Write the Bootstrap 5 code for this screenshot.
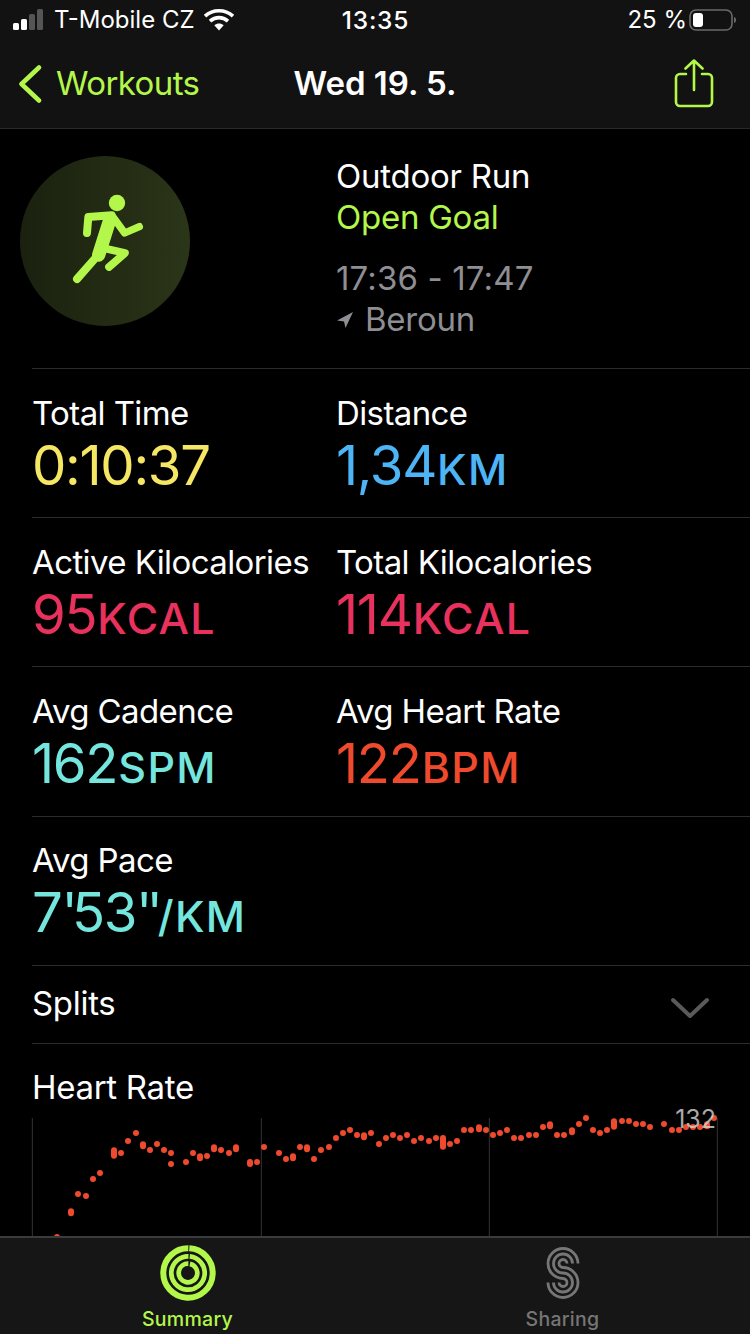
<!DOCTYPE html>
<html lang="en">
<head>
<meta charset="utf-8">
<title>Workout</title>
<link href="https://cdn.jsdelivr.net/npm/bootstrap@5.3.0/dist/css/bootstrap.min.css" rel="stylesheet">
<style>
html,body{background:#000;margin:0}
body{width:750px;height:1334px;overflow:hidden;font-family:Inter,"Liberation Sans",sans-serif;color:#fff;font-size:33px;letter-spacing:-.6px}
.screen{height:1334px}
.head-bar{background:#121212;border-bottom:1px solid #2a2a2a;height:129px}
.status-row{height:40px;padding:0 12px 0 13px;font-size:24px;letter-spacing:0;line-height:40px}
.status-side{width:300px}
.status-time{font-size:24.5px;font-weight:500;letter-spacing:.8px}
.batt-pct{margin-right:2px}
.nav-row{height:88px;padding:0 36px 0 18px}
.nav-link-green{color:#b4f74b;font-size:33px}
.nav-title{font-size:33px;font-weight:600;letter-spacing:0;left:0;right:0;top:0;bottom:0}
.hero-area{height:239px;padding:27px 0 0 20px}
.hero-icon{width:170px;height:170px;margin-right:146px}
.hero-text{line-height:41px;letter-spacing:-.25px}
.text-lime{color:#b4f74b}
.text-dim{color:#8e8e93}
.hero-gap{margin-top:20px;letter-spacing:.15px}
.place-arrow{margin-right:11px}
.stat-line{margin-left:32px;border-top:1px solid #2c2c2e;height:149px;padding:24px 0 0 1px}
.stat-line.tall{height:150px}
.stat-line.pace-line{padding-top:23px}
.stat-cell{width:305px;margin-left:-1px;white-space:nowrap}
.stat-label{line-height:41px}
.stat-value{font-size:54.5px;line-height:62px;letter-spacing:-1.3px}
.stat-unit{font-size:43px;font-weight:500;letter-spacing:1.3px;margin-left:1px}
.tick-mark{letter-spacing:-6px}
.c-yellow{color:#f5e663}.c-blue{color:#4db5f5}.c-pink{color:#e8325d}.c-cyan{color:#74e6dd}.c-red{color:#ef4a2d}
.splits-line{margin-left:32px;border-top:1px solid #2c2c2e;height:78px;padding:0 41px 2px 0;letter-spacing:-.3px}
.hr-area{margin-left:32px;border-top:1px solid #2c2c2e;padding:23px 0 0 0;letter-spacing:-.3px}
.hr-label{line-height:41px}
.chart-box{margin:10px 0 0 -32px;width:750px;height:118px}
.chart-box svg{display:block;overflow:visible}
.chart-max{right:34px;top:-13px;font-size:25px;letter-spacing:0;color:#d4d4d4;opacity:.8;line-height:28px}
.tab-strip{flex:1;background:#161616;border-top:2px solid #3b3b3b;z-index:2}
.tab-item{width:375px;padding-top:6px;font-size:19.5px;letter-spacing:.3px;font-weight:500;line-height:24px;color:#767676}
.tab-item.on{color:#b4f74b}
.tab-item svg{display:block;margin-bottom:5px}
.flow-clip{height:1107px;overflow:hidden}
</style>
</head>
<body>
<div class="screen d-flex flex-column">
  <header class="head-bar flex-shrink-0">
    <div class="status-row d-flex align-items-center justify-content-between">
      <div class="status-side d-flex align-items-center">
        <svg width="37" height="22" viewBox="0 0 37 22" class="me-1"><g fill="#fff"><rect x="0" y="14" width="6" height="7" rx="1.5"/><rect x="8" y="10" width="6" height="11" rx="1.5"/></g><g fill="#555"><rect x="16" y="5" width="6" height="16" rx="1.5"/><rect x="24" y="0" width="6" height="21" rx="1.5"/></g></svg>
        <span>T-Mobile CZ</span>
        <svg width="32" height="24" viewBox="0 0 32 24" class="ms-2"><g fill="none" stroke="#fff" stroke-width="3.6"><path d="M2 8.2C10 .9 22 .9 30 8.2"/><path d="M7 13.2c5.400-4.800 12.600-4.800 18 0"/></g><path d="M11.300 17.300c3-2.500 6.400-2.500 9.400 0L16 22.500z" fill="#fff"/></svg>
      </div>
      <div class="status-time">13:35</div>
      <div class="status-side d-flex align-items-center justify-content-end">
        <span class="batt-pct">25 %</span>
        <svg width="49" height="24" viewBox="0 0 49 24"><rect x="1" y="2" width="42" height="20" rx="6" fill="none" stroke="#6a6a6a" stroke-width="1.600"/><rect x="4" y="5" width="10" height="14" rx="3" fill="#fff"/><path d="M45 9c1.500.5 2 1.500 2 3s-.5 2.500-2 3z" fill="#6a6a6a"/></svg>
      </div>
    </div>
    <nav class="nav-row d-flex align-items-center justify-content-between position-relative">
      <div class="nav-link-green d-flex align-items-center">
        <svg width="26" height="38" viewBox="0 0 26 38" fill="none" stroke="#b4f74b" stroke-width="4.500" stroke-linecap="round" stroke-linejoin="round"><path d="M21 2.500 3.500 19 21 35.500"/></svg>
        <span class="ms-2 ps-1">Workouts</span>
      </div>
      <div class="nav-title position-absolute d-flex align-items-center justify-content-center">Wed 19. 5.</div>
      <svg width="40" height="50" viewBox="0 0 40 50" fill="none" stroke="#b4f74b" stroke-width="2.600" stroke-linecap="round" stroke-linejoin="round"><path d="M12 15H6a4 4 0 0 0-4 4v24a4 4 0 0 0 4 4h28a4 4 0 0 0 4-4V19a4 4 0 0 0-4-4h-6"/><path d="M20 31V2M11.500 9.500 20 1.500l8.500 8"/></svg>
    </nav>
  </header>

  <div class="flow-clip flex-shrink-0">
    <section class="hero-area d-flex">
      <svg class="hero-icon flex-shrink-0" viewBox="60 48 510 510">
        <defs><linearGradient id="disc" x1="0" y1="0" x2="1" y2="0"><stop offset="0" stop-color="#1a210f"/><stop offset="1" stop-color="#2b3518"/></linearGradient></defs>
        <circle cx="315" cy="303" r="255" fill="url(#disc)"/>
        <g fill="none" stroke="#b4f74b" stroke-linecap="round" stroke-linejoin="round">
          <path d="M261 279 265 231 335 226" stroke-width="24"/>
          <path d="M330 238 296 345" stroke-width="40"/>
          <path d="M340 232 374 279 418 260" stroke-width="22"/>
          <path d="M312 325 375 339 327 381" stroke-width="23"/>
          <path d="M288 352 231 417" stroke-width="24"/>
        </g>
        <circle cx="351" cy="189" r="24.500" fill="#b4f74b"/>
      </svg>
      <div class="hero-text">
        <div>Outdoor Run</div>
        <div class="text-lime">Open Goal</div>
        <div class="text-dim hero-gap">17:36 - 17:47</div>
        <div class="text-dim d-flex align-items-center"><svg width="18" height="18" viewBox="0 0 18 18" class="place-arrow"><path d="M17 1 1 9.500l7 1 1.500 6.500z" fill="#8e8e93"/></svg><span>Beroun</span></div>
      </div>
    </section>

    <section class="stat-line d-flex">
      <div class="stat-cell"><div class="stat-label">Total Time</div><div class="stat-value c-yellow">0:10:37</div></div>
      <div class="stat-cell"><div class="stat-label">Distance</div><div class="stat-value c-blue">1,34<span class="stat-unit">KM</span></div></div>
    </section>
    <section class="stat-line d-flex">
      <div class="stat-cell"><div class="stat-label">Active Kilocalories</div><div class="stat-value c-pink">95<span class="stat-unit">KCAL</span></div></div>
      <div class="stat-cell"><div class="stat-label">Total Kilocalories</div><div class="stat-value c-pink">114<span class="stat-unit">KCAL</span></div></div>
    </section>
    <section class="stat-line tall d-flex">
      <div class="stat-cell"><div class="stat-label">Avg Cadence</div><div class="stat-value c-cyan">162<span class="stat-unit">SPM</span></div></div>
      <div class="stat-cell"><div class="stat-label">Avg Heart Rate</div><div class="stat-value c-red">122<span class="stat-unit">BPM</span></div></div>
    </section>
    <section class="stat-line pace-line d-flex">
      <div class="stat-cell"><div class="stat-label">Avg Pace</div><div class="stat-value c-cyan">7<span class="tick-mark">'</span>53<span class="tick-mark">''</span><span class="stat-unit">/KM</span></div></div>
    </section>
    <section class="splits-line d-flex align-items-center justify-content-between">
      <span>Splits</span>
      <svg width="38" height="22" viewBox="0 0 38 22" fill="none" stroke="#5a5a5c" stroke-width="4" stroke-linecap="round" stroke-linejoin="round" class="mt-2"><path d="M2 3 19 19 36 3"/></svg>
    </section>
    <section class="hr-area">
      <div class="hr-label">Heart Rate</div>
      <div class="chart-box position-relative">
        <svg width="750" height="118" viewBox="0 54 2250 354">
          <path d="M97 54V408M784 54V408M1468 54V408M2152 54V408" stroke="#333" stroke-width="3" fill="none"/>
          <path fill="none" stroke="#ef4a2d" stroke-width="18" stroke-linecap="round" d="M171 411v0M213 334v6M234 282v0M258 288v0M279 237v0M300 219v0M342 151v16M363 159v0M384 123v0M408 99v0M429 133v6M450 150v0M471 132v0M492 150v0M513 159v0M513 192v0M558 186v0M579 159v0M600 169v6M621 168v0M642 142v6M663 150v0M687 159v0M708 142v6M750 186v6M771 186v0M792 141v0M837 159v0M858 177v0M879 169v6M900 141v0M921 142v6M942 177v0M963 150v0M987 141v0M1008 114v0M1029 99v0M1050 90v0M1071 105v0M1092 106v6M1113 99v0M1137 132v0M1158 114v0M1179 105v0M1200 114v0M1221 105v0M1242 123v0M1263 114v0M1287 123v0M1308 114v0M1329 114v26M1350 132v0M1371 123v0M1392 90v0M1413 90v0M1437 82v6M1458 90v0M1479 105v0M1500 99v0M1521 90v0M1542 114v0M1563 114v0M1587 105v0M1608 105v0M1629 81v0M1650 73v6M1671 105v0M1692 105v0M1716 91v6M1737 72v0M1758 54v0M1779 90v0M1800 99v0M1821 90v0M1842 64v16M1866 63v0M1887 63v0M1908 72v0M1929 72v0M1950 81v0M1992 72v0M2016 90v0M2037 90v0M2058 81v0M2079 81v0M2100 81v0M2121 73v6M2142 54v0"/>
        </svg>
        <div class="chart-max position-absolute">132</div>
      </div>
    </section>
  </div>

  <footer class="tab-strip d-flex position-relative">
    <div class="tab-item on d-flex flex-column align-items-center">
      <svg width="58" height="58" viewBox="-29 -29 58 58" fill="none" stroke="#b4f74b">
        <circle r="24.700" stroke-width="6" stroke-dasharray="153.200 2" transform="rotate(-87)"/>
        <circle r="16.700" stroke-width="4.700" stroke-dasharray="102.900 2" transform="rotate(-84)"/>
        <circle r="9.300" stroke-width="4.700" stroke-dasharray="56.400 2" transform="rotate(-78)"/>
      </svg>
      <span>Summary</span>
    </div>
    <div class="tab-item d-flex flex-column align-items-center">
      <svg width="58" height="58" viewBox="-29 -29 58 58" fill="none" stroke="#767676" stroke-width="2.800">
        <path d="M15-9.500A15 15 0 1 0 0 5.500A4 4 0 1 1-4 9.500"/>
        <path d="M9.500-9.500A9.500 9.500 0 1 0 0 0A9.500 9.500 0 1 1-9.500 9.500"/>
        <path d="M4-9.500A4 4 0 1 0 0-5.500A15 15 0 1 1-15 9.500"/>
      </svg>
      <span>Sharing</span>
    </div>
  </footer>
</div>
<script src="https://cdn.jsdelivr.net/npm/bootstrap@5.3.0/dist/js/bootstrap.bundle.min.js"></script>
</body>
</html>
